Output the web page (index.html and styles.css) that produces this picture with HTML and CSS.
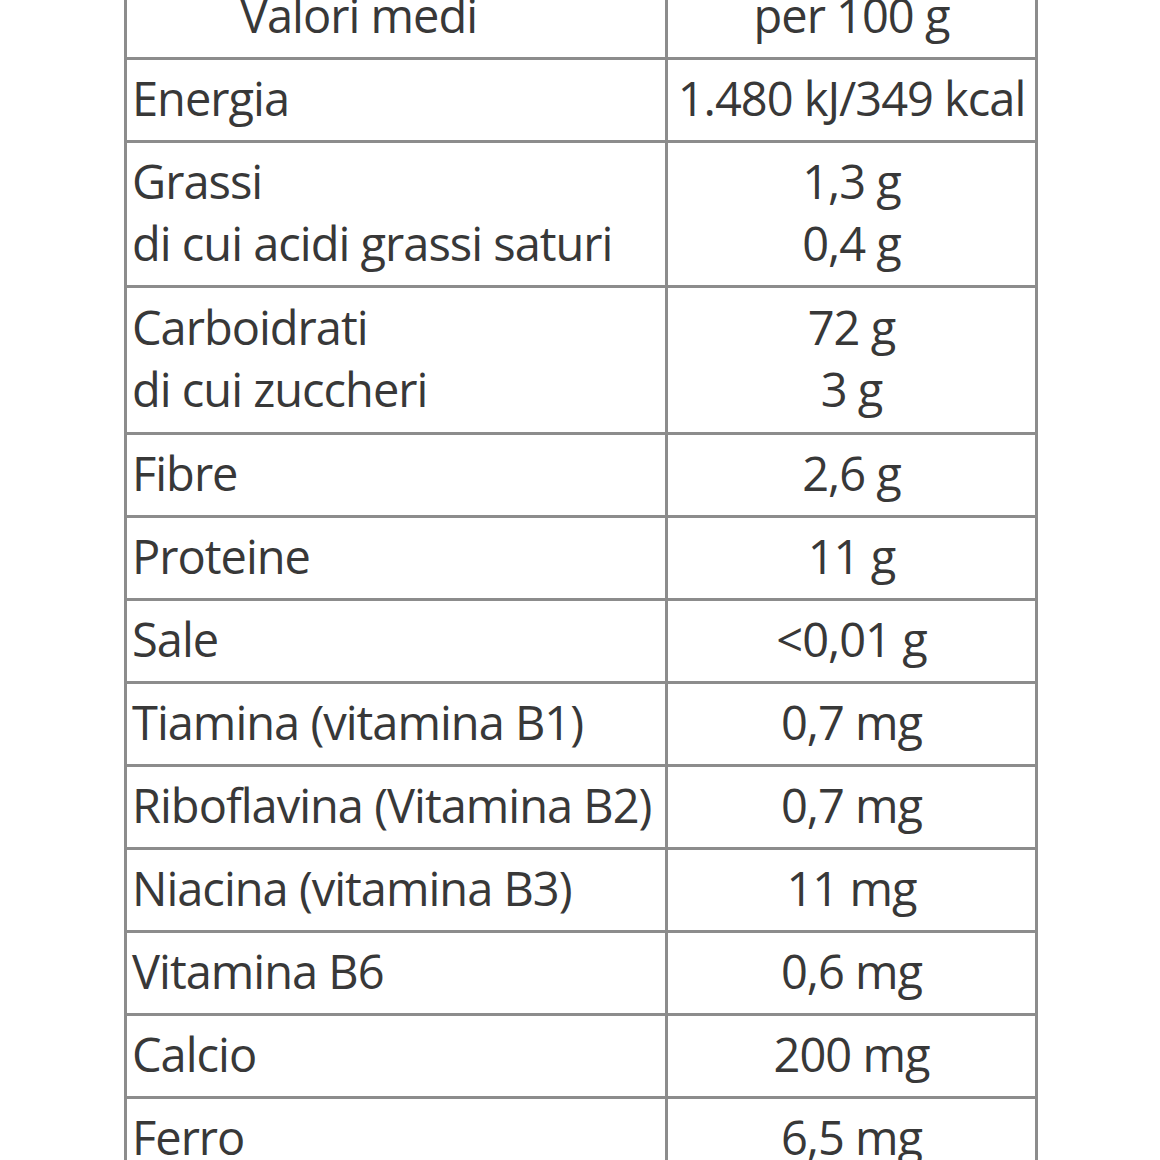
FILE: index.html
```html
<!DOCTYPE html>
<html lang="it">
<head>
<meta charset="utf-8">
<title>Valori nutrizionali</title>
<link rel="stylesheet" href="styles.css">
</head>
<body>
<table class="nutri">
  <colgroup>
    <col class="col-name">
    <col class="col-value">
  </colgroup>
  <thead>
    <tr>
      <th class="head-name">Valori medi</th>
      <th class="head-value">per 100 g</th>
    </tr>
  </thead>
  <tbody>
    <tr><td>Energia</td><td class="val">1.480 kJ/349 kcal</td></tr>
    <tr><td>Grassi<br>di cui acidi grassi saturi</td><td class="val">1,3 g<br>0,4 g</td></tr>
    <tr class="tall"><td>Carboidrati<br>di cui zuccheri</td><td class="val">72 g<br>3 g</td></tr>
    <tr><td>Fibre</td><td class="val">2,6 g</td></tr>
    <tr><td>Proteine</td><td class="val">11 g</td></tr>
    <tr><td>Sale</td><td class="val">&lt;0,01 g</td></tr>
    <tr><td>Tiamina (vitamina B1)</td><td class="val">0,7 mg</td></tr>
    <tr><td>Riboflavina (Vitamina B2)</td><td class="val">0,7 mg</td></tr>
    <tr><td>Niacina (vitamina B3)</td><td class="val">11 mg</td></tr>
    <tr><td>Vitamina B6</td><td class="val">0,6 mg</td></tr>
    <tr><td>Calcio</td><td class="val">200 mg</td></tr>
    <tr><td>Ferro</td><td class="val">6,5 mg</td></tr>
  </tbody>
</table>
</body>
</html>
```
FILE: styles.css
```css
html, body {
  margin: 0;
  padding: 0;
  background: #ffffff;
}

body {
  font-family: "Open Sans", "DejaVu Sans", sans-serif;
  color: #383838;
  overflow: hidden;
}

.nutri {
  margin: -26px 0 0 124px;
  width: 911px;
  table-layout: fixed;
  border-collapse: collapse;
  font-size: 47px;
  line-height: 62px;
  letter-spacing: -1px;
}

.col-name {
  width: 541px;
}

.col-value {
  width: 370px;
}

.nutri th,
.nutri td {
  border: 3px solid #8c8c8c;
  padding: 7px 0 11px 5px;
  vertical-align: middle;
  text-align: left;
  font-weight: 400;
  white-space: nowrap;
}

.nutri th {
  text-align: center;
}

.nutri .head-name {
  padding-right: 80px;
}

.nutri .head-value,
.nutri .val {
  text-align: center;
  padding-left: 0;
}

.nutri .tall td {
  padding-top: 8px;
  padding-bottom: 12px;
}
```
